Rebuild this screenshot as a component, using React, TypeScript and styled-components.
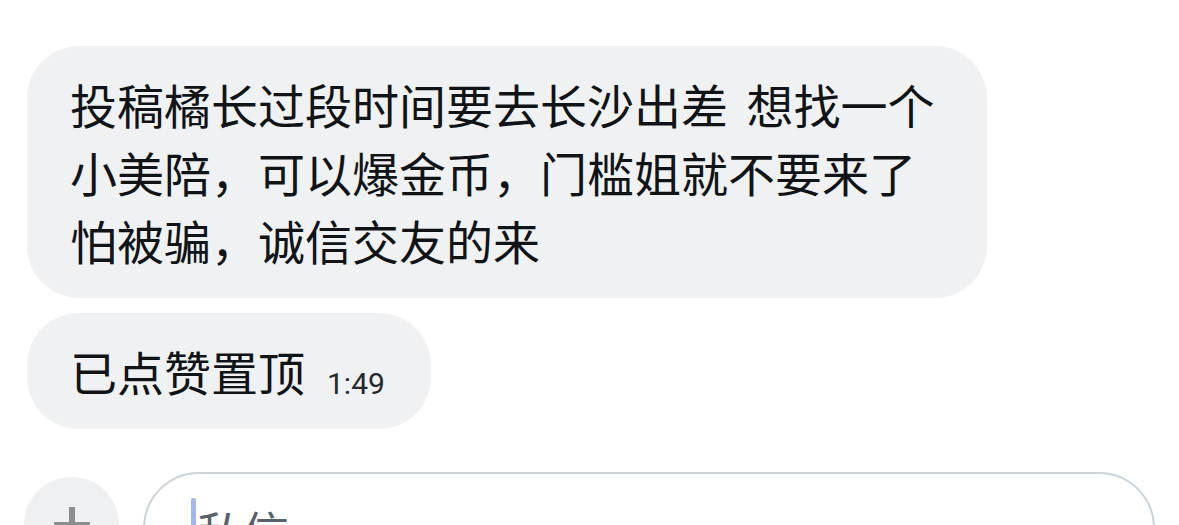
import React from "react";
import styled, { createGlobalStyle } from "styled-components";

const GlobalStyle = createGlobalStyle`
  html, body {
    margin: 0;
    padding: 0;
    background: #ffffff;
  }
  body {
    width: 1179px;
    height: 525px;
    overflow: hidden;
    font-family: "Noto Sans CJK SC", "Noto Sans", sans-serif;
  }
`;

const Page = styled.div`
  display: flex;
  flex-direction: column;
  padding-top: 46px;
  width: 100%;
  height: 525px;
  box-sizing: border-box;
  overflow: hidden;
`;

const Thread = styled.div`
  display: flex;
  flex-direction: column;
  align-items: flex-start;
  gap: 15px;
  padding-left: 27px;
`;

const Bubble = styled.div<{ $width?: number }>`
  display: flex;
  align-items: baseline;
  box-sizing: border-box;
  width: ${(p) => (p.$width ? `${p.$width}px` : "auto")};
  padding: 24px 46px 24px 43px;
  background: #eff1f3;
  border-radius: 52px;
  color: #111417;
  font-size: 47px;
  line-height: 68px;
  word-spacing: 8px;
`;

const MessageText = styled.span`
  white-space: nowrap;
`;

const Time = styled.span`
  margin-left: 22px;
  font-family: Roboto, "Liberation Sans", sans-serif;
  font-size: 30px;
  line-height: 30px;
  color: #26292c;
  position: relative;
  top: 3px;
`;

const Composer = styled.div`
  display: flex;
  align-items: flex-start;
  gap: 24px;
  margin-top: 43px;
  padding-left: 24px;
`;

const AddButton = styled.div`
  display: flex;
  align-items: center;
  justify-content: center;
  flex: none;
  width: 95px;
  height: 95px;
  margin-top: 5px;
  border-radius: 50%;
  background: #eef0f2;
`;

const InputBox = styled.div`
  display: flex;
  align-items: flex-start;
  box-sizing: border-box;
  width: 1012px;
  height: 112px;
  padding: 22px 0 0 46px;
  border: 2px solid #ccd3d9;
  border-radius: 56px;
`;

const Caret = styled.span`
  display: block;
  width: 5px;
  height: 48px;
  margin-top: 2px;
  border-radius: 2px;
  background: #a4b6ef;
`;

const Placeholder = styled.span`
  font-size: 46px;
  line-height: 68px;
  color: #56616b;
  margin-left: 1px;
`;

const PlusIcon = () => (
  <svg width="40" height="40" viewBox="0 0 40 40">
    <path d="M20 2 V38 M2 20 H38" stroke="#8b8d90" strokeWidth="6" strokeLinecap="butt" fill="none" />
  </svg>
);

export default function App() {
  return (
    <>
      <GlobalStyle />
      <Page>
        <Thread>
          <Bubble $width={960}>
            <MessageText>
              投稿橘长过段时间要去长沙出差 想找一个
              <br />
              小美陪，可以爆金币，门槛姐就不要来了
              <br />
              怕被骗，诚信交友的来
            </MessageText>
          </Bubble>
          <Bubble>
            <MessageText>已点赞置顶</MessageText>
            <Time>1:49</Time>
          </Bubble>
        </Thread>
        <Composer>
          <AddButton>
            <PlusIcon />
          </AddButton>
          <InputBox>
            <Caret />
            <Placeholder>私信</Placeholder>
          </InputBox>
        </Composer>
      </Page>
    </>
  );
}
